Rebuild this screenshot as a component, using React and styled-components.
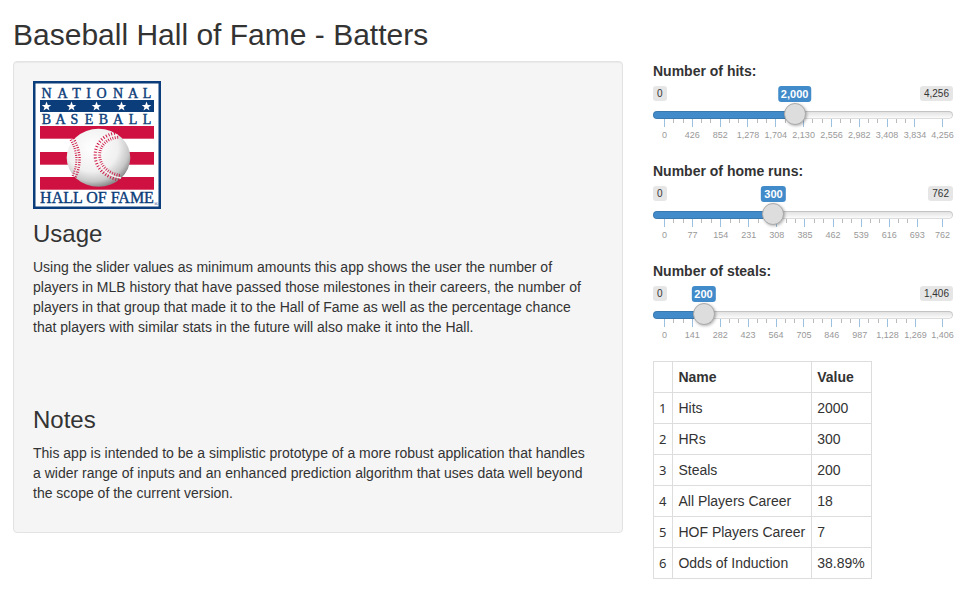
import React, { useId, useState } from "react";
import styled, { createGlobalStyle } from "styled-components";

const GlobalStyle = createGlobalStyle`
  *, *::before, *::after { box-sizing: border-box; }
  body {
    margin: 0;
    background: #fff;
    color: #333;
    font: 14px/20px "Liberation Sans", Arial, sans-serif;
  }
`;

const Page = styled.div`
  padding: 18px 21px 18px 13px;
`;

const Title = styled.h1`
  margin: 0 0 10px;
  font-size: 30px;
  font-weight: 500;
  line-height: 33px;
`;

const Columns = styled.div`
  display: grid;
  grid-template-columns: minmax(0, 1fr) 300px;
  gap: 30px;
  align-items: start;
`;

const Well = styled.main`
  padding: 19px;
  border: 1px solid #e3e3e3;
  border-radius: 4px;
  background: #f5f5f5;
  box-shadow: inset 0 1px 1px rgba(0, 0, 0, 0.05);
`;

const Logo = styled.svg`
  display: block;
  width: 128px;
  height: 128px;
`;

const Section = styled.section`
  margin-top: 12px;

  & + & {
    margin-top: 70px;
  }

  &:last-child {
    margin-bottom: 10px;
  }
`;

const SectionTitle = styled.h2`
  margin: 0 0 10px;
  font-size: 24px;
  font-weight: 500;
  line-height: 26px;
`;

const Paragraph = styled.p`
  margin: 0;
  padding-right: 10px;
`;

const Sidebar = styled.aside`
  display: flex;
  flex-direction: column;
  align-items: stretch;
  gap: 15px;
`;

const Label = styled.label`
  display: block;
  margin-bottom: 5px;
  font-weight: bold;
`;

const SliderHead = styled.div`
  position: relative;
  display: flex;
  justify-content: space-between;
  height: 18px;
`;

const Limit = styled.span`
  height: 15px;
  padding: 0 4px;
  border-radius: 3px;
  background: #e6e6e6;
  font-size: 10px;
  line-height: 15px;
`;

const Bubble = styled.output`
  position: absolute;
  top: 0;
  padding: 0 3px;
  border-radius: 3px;
  background: #428bca;
  color: #fff;
  font-size: 11px;
  font-weight: bold;
  line-height: 16px;
  transform: translateX(-50%);
`;

const Range = styled.input`
  position: relative;
  z-index: 1;
  display: block;
  appearance: none;
  width: 100%;
  height: 22px;
  margin: 0 0 -7px;
  background: transparent;

  &::-webkit-slider-runnable-track {
    height: 8px;
    border-radius: 8px;
    background:
      linear-gradient(#428bca, #428bca) 0 0 / var(--fill) 100% no-repeat,
      linear-gradient(#dedede, #fff);
    border: 0;
    box-shadow: inset 0 0 0 1px rgba(0, 0, 0, 0.13);
  }

  &::-webkit-slider-thumb {
    appearance: none;
    width: 22px;
    height: 22px;
    margin-top: -8px;
    border: 1px solid #aaa;
    border-radius: 50%;
    background: #ddd;
    box-shadow: 1px 1px 3px rgba(0, 0, 0, 0.3);
    cursor: pointer;
  }
`;

const Scale = styled.div`
  display: grid;
  height: 27px;
  margin: 0 11px;
  color: #999;
  font-size: 9px;
  line-height: 10px;
`;

const Step = styled.div`
  min-width: 0;
`;

const Ticks = styled.div`
  display: grid;
  grid-template-columns: repeat(${(p) => p.$count}, 1fr);
  height: 11px;
`;

const Tick = styled.span`
  width: 1px;
  height: ${(p) => (p.$major ? 8 : 4)}px;
  background: ${(p) => (p.$major ? "#9cc0e0" : "#bbb")};
`;

const StepLabel = styled.span`
  display: flex;
  justify-content: center;
  width: 1px;
  white-space: nowrap;
`;

const Table = styled.table`
  align-self: flex-start;
  border-collapse: collapse;
`;

const cellBase = `
  height: 31px;
  padding: 5px 6px 5px 5px;
  border: 1px solid #ddd;
  text-align: left;
`;

const HeadCell = styled.th`
  ${cellBase}
`;

const Cell = styled.td`
  ${cellBase}
`;

const IndexCell = styled.th`
  ${cellBase}
  font: 13px/20px "Noto Sans", sans-serif;
`;

const format = (n) => n.toLocaleString("en-US");

function Slider({ label, max, step, value, onChange }) {
  const id = useId();
  const marks = Array.from({ length: 10 }, (_, i) => i * step).concat(max);
  const columns = marks
    .map((m, i) => (i < 10 ? `${marks[i + 1] - m}fr` : "0"))
    .join(" ");
  const center = `calc(11px + (100% - 22px) * ${value / max})`;

  return (
    <div>
      <Label htmlFor={id}>{label}</Label>
      <SliderHead>
        <Limit>0</Limit>
        <Limit>{format(max)}</Limit>
        <Bubble htmlFor={id} style={{ left: center }}>{format(value)}</Bubble>
      </SliderHead>
      <Range
        id={id}
        type="range"
        min={0}
        max={max}
        value={value}
        onChange={(e) => onChange(Number(e.target.value))}
        style={{ "--fill": center }}
      />
      <Scale style={{ gridTemplateColumns: columns }}>
        {marks.map((m, i) => (
          <Step key={m}>
            <Ticks $count={i < 9 ? 3 : 1}>
              <Tick $major />
              {i < 9 && <Tick />}
              {i < 9 && <Tick />}
            </Ticks>
            <StepLabel>{format(m)}</StepLabel>
          </Step>
        ))}
      </Scale>
    </div>
  );
}

const NAVY = "#0b3d7a";
const RED = "#cf1141";
const STAR = "0,-5 1.3,-1.6 4.8,-1.5 2,0.7 3,4 0,2 -3,4 -2,0.7 -4.8,-1.5 -1.3,-1.6";

function HallOfFameLogo() {
  return (
    <Logo viewBox="0 0 128 128" role="img" aria-label="National Baseball Hall of Fame">
      <defs>
        <radialGradient id="ball" cx="0.4" cy="0.33" r="0.68">
          <stop offset="0" stopColor="#fff" />
          <stop offset="0.6" stopColor="#f0f0f0" />
          <stop offset="0.85" stopColor="#c8c8c8" />
          <stop offset="1" stopColor="#8c8c8c" />
        </radialGradient>
      </defs>
      <rect x="1.2" y="1.2" width="125.6" height="125.6" fill="#fff" stroke={NAVY} strokeWidth="2.6" />
      <rect x="7" y="19" width="114" height="12" fill={NAVY} />
      {[13.5, 38.5, 63.5, 88.5, 113.5].map((x) => (
        <polygon key={x} points={STAR} transform={`translate(${x} 25.5)`} fill="#fff" />
      ))}
      {[45, 71, 96].map((y) => (
        <rect key={y} x="7" y={y} width="114" height="12.7" fill={RED} />
      ))}
      <g
        fill={NAVY}
        stroke={NAVY}
        strokeWidth="0.4"
        fontFamily="'Liberation Serif', serif"
        textAnchor="middle"
      >
        <text fontSize="14" y="16.7" x="13.5 29.5 43.5 55.5 68.5 85 100 114">NATIONAL</text>
        <text fontSize="14" y="43" x="13.5 27.5 41.5 56 70.5 85 100 114">BASEBALL</text>
        <text fontSize="16" y="121.5" x="64">HALL OF FAME</text>
        <text fontSize="6" y="125" x="123" strokeWidth="0">®</text>
      </g>
      <ellipse cx="65.5" cy="76.7" rx="31.8" ry="29" fill="url(#ball)" />
      <g fill="none">
        <path d="M39 58 Q50 76 41 96" stroke={RED} strokeWidth="5.5" strokeDasharray="0.9 1.5" />
        <path d="M39 58 Q50 76 41 96" stroke="#f1e9e9" strokeWidth="1" />
        <path d="M85 54 C58 56 56 92 88 97" stroke={RED} strokeWidth="7.5" strokeDasharray="0.9 1.7" />
        <path d="M85 54 C58 56 56 92 88 97" stroke="#f7f3f3" strokeWidth="1.6" />
      </g>
    </Logo>
  );
}

export default function App() {
  const [hits, setHits] = useState(2000);
  const [homeRuns, setHomeRuns] = useState(300);
  const [steals, setSteals] = useState(200);

  const rows = [
    ["Hits", hits],
    ["HRs", homeRuns],
    ["Steals", steals],
    ["All Players Career", 18],
    ["HOF Players Career", 7],
    ["Odds of Induction", "38.89%"],
  ];

  return (
    <Page>
      <GlobalStyle />
      <Title>Baseball Hall of Fame - Batters</Title>
      <Columns>
        <Well>
          <HallOfFameLogo />
          <Section>
            <SectionTitle>Usage</SectionTitle>
            <Paragraph>
              Using the slider values as minimum amounts this app shows the user the number of
              players in MLB history that have passed those milestones in their careers, the number
              of players in that group that made it to the Hall of Fame as well as the percentage
              chance that players with similar stats in the future will also make it into the Hall.
            </Paragraph>
          </Section>
          <Section>
            <SectionTitle>Notes</SectionTitle>
            <Paragraph>
              This app is intended to be a simplistic prototype of a more robust application that
              handles a wider range of inputs and an enhanced prediction algorithm that uses data
              well beyond the scope of the current version.
            </Paragraph>
          </Section>
        </Well>
        <Sidebar>
          <Slider label="Number of hits:" max={4256} step={426} value={hits} onChange={setHits} />
          <Slider label="Number of home runs:" max={762} step={77} value={homeRuns} onChange={setHomeRuns} />
          <Slider label="Number of steals:" max={1406} step={141} value={steals} onChange={setSteals} />
          <Table>
            <thead>
              <tr>
                <HeadCell aria-label="Row" />
                <HeadCell scope="col">Name</HeadCell>
                <HeadCell scope="col">Value</HeadCell>
              </tr>
            </thead>
            <tbody>
              {rows.map(([name, value], i) => (
                <tr key={name}>
                  <IndexCell scope="row">{i + 1}</IndexCell>
                  <Cell>{name}</Cell>
                  <Cell>{value}</Cell>
                </tr>
              ))}
            </tbody>
          </Table>
        </Sidebar>
      </Columns>
    </Page>
  );
}
